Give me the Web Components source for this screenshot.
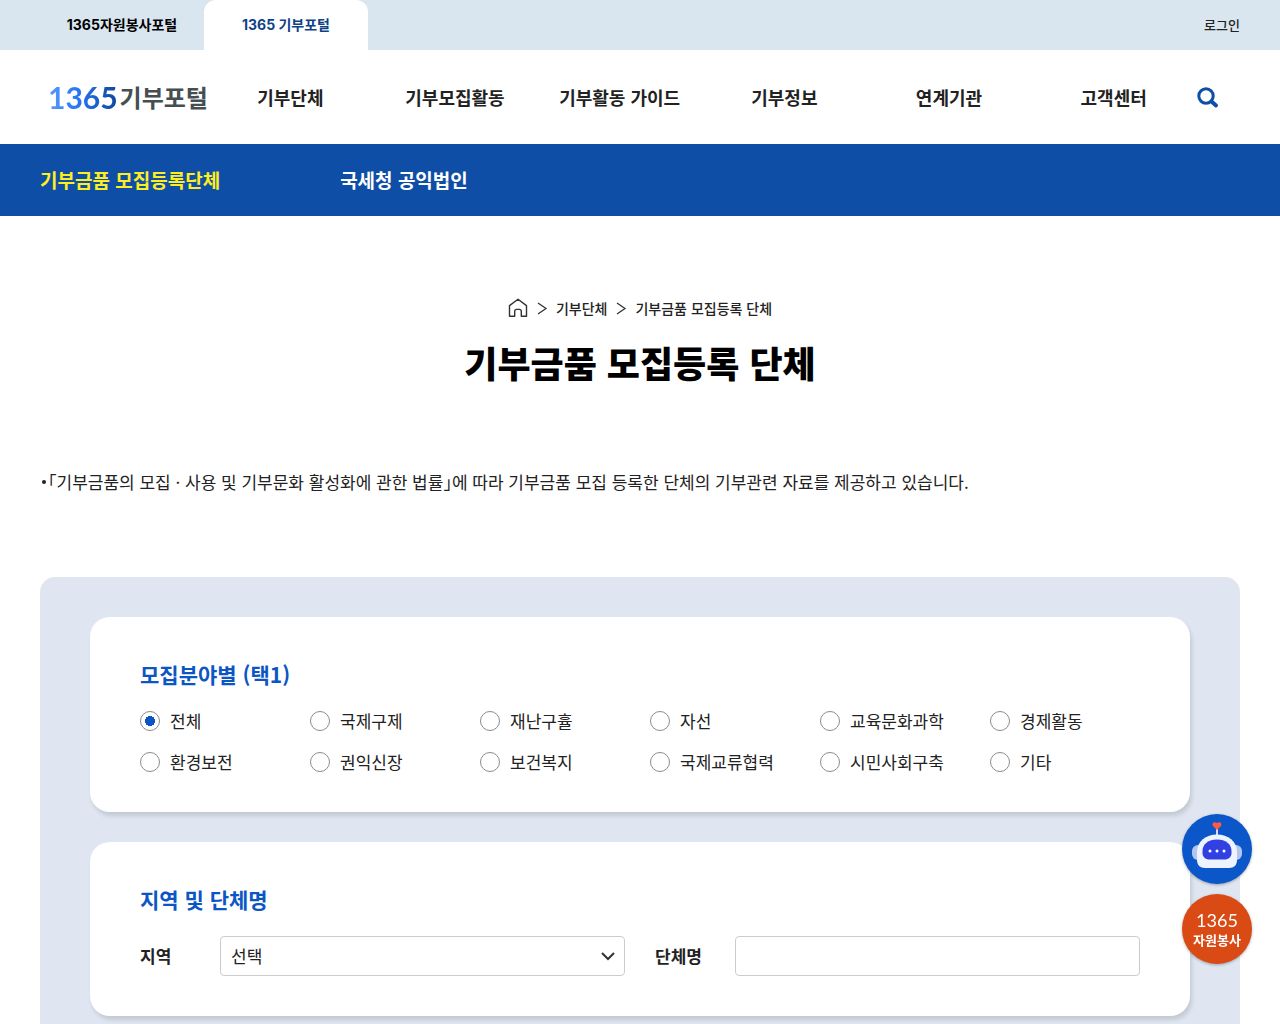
<!DOCTYPE html>
<html lang="ko">
<head>
<meta charset="UTF-8">
<meta name="viewport" content="width=device-width, initial-scale=1.0">
<title>기부금품 모집등록 단체</title>
<style>
    body {
        margin: 0;
        background: #fff;
        color: #222;
        font-family: "Noto Sans CJK KR", sans-serif;
        font-size: 17px;
        line-height: 24px;
    }

    main {
        max-width: 1200px;
        margin: 0 auto;
        padding: 80px 40px 0;
    }
</style>
</head>
<body>
<top-bar></top-bar>
<site-header></site-header>
<sub-nav></sub-nav>
<main>
    <page-title>기부금품 모집등록 단체</page-title>
    <page-note>「기부금품의 모집 · 사용 및 기부문화 활성화에 관한 법률」에 따라 기부금품 모집 등록한 단체의 기부관련 자료를 제공하고 있습니다.</page-note>
    <search-panel>
        <search-card heading="모집분야별 (택1)">
            <category-radios></category-radios>
        </search-card>
        <search-card heading="지역 및 단체명">
            <region-fields></region-fields>
        </search-card>
    </search-panel>
</main>
<quick-links></quick-links>

<script>
class TopBar extends HTMLElement {
    connectedCallback() {
        this.attachShadow({ mode: 'open' });
        this.shadowRoot.innerHTML = `
            <style>
                :host {
                    display: block;
                    background: #d9e6f0;
                    font-size: 14px;
                }

                .bar {
                    display: flex;
                    align-items: stretch;
                    max-width: 1200px;
                    height: 50px;
                    margin: 0 auto;
                    padding: 0 40px;
                }

                a {
                    display: flex;
                    align-items: center;
                    color: #000;
                    text-decoration: none;
                }

                .tab {
                    justify-content: center;
                    width: 164px;
                    border-radius: 12px 12px 0 0;
                    font-family: Inter, "Noto Sans CJK KR", sans-serif;
                    font-weight: 700;
                }

                .tab.on {
                    background: #fff;
                    color: #0f4287;
                }

                .login {
                    margin-left: auto;
                    color: #222;
                    font-size: 13px;
                    font-weight: 500;
                }
            </style>
            <div class="bar">
                <a class="tab" href="#">1365자원봉사포털</a>
                <a class="tab on" href="#">1365 기부포털</a>
                <a class="login" href="#">로그인</a>
            </div>
        `;
    }
}

class SiteHeader extends HTMLElement {
    connectedCallback() {
        this.attachShadow({ mode: 'open' });
        this.shadowRoot.innerHTML = `
            <style>
                :host {
                    display: block;
                    background: #fff;
                }

                .header {
                    display: flex;
                    align-items: center;
                    max-width: 1200px;
                    height: 94px;
                    margin: 0 auto;
                    padding: 0 40px;
                }

                a {
                    color: #222;
                    text-decoration: none;
                }

                .logo {
                    display: flex;
                    align-items: center;
                    gap: 2px;
                    width: 160px;
                    padding-left: 8px;
                    white-space: nowrap;
                }

                .num {
                    background: linear-gradient(90deg, #5b9bff, #2779f5 40%, #0e479c);
                    -webkit-background-clip: text;
                    background-clip: text;
                    color: transparent;
                    font-family: Lato, sans-serif;
                    font-size: 30px;
                    font-weight: 700;
                    line-height: 40px;
                }

                .name {
                    color: #454f52;
                    font-size: 24px;
                    font-weight: 700;
                    line-height: 40px;
                }

                nav {
                    display: grid;
                    grid-template-columns: repeat(6, 1fr);
                    flex: 1;
                    text-align: center;
                    font-size: 18px;
                    font-weight: 700;
                }

                button {
                    display: flex;
                    margin: 0 20px 0 0;
                    padding: 0;
                    border: 0;
                    background: none;
                }
            </style>
            <div class="header">
                <a class="logo" href="#"><span class="num">1365</span><span class="name">기부포털</span></a>
                <nav>
                    <a href="#">기부단체</a>
                    <a href="#">기부모집활동</a>
                    <a href="#">기부활동 가이드</a>
                    <a href="#">기부정보</a>
                    <a href="#">연계기관</a>
                    <a href="#">고객센터</a>
                </nav>
                <button type="button" aria-label="검색">
                    <svg width="24" height="24" viewBox="0 0 24 24" fill="none" stroke="#0f4ea6" stroke-linecap="round">
                        <circle cx="10" cy="11" r="7.2" stroke-width="3"/>
                        <path d="M15.5 16.5l4.5 4" stroke-width="4"/>
                    </svg>
                </button>
            </div>
        `;
    }
}

class SubNav extends HTMLElement {
    connectedCallback() {
        this.attachShadow({ mode: 'open' });
        this.shadowRoot.innerHTML = `
            <style>
                :host {
                    display: block;
                    background: #0f4ea6;
                    font-size: 19px;
                    font-weight: 700;
                }

                nav {
                    display: flex;
                    align-items: center;
                    gap: 120px;
                    max-width: 1200px;
                    height: 72px;
                    margin: 0 auto;
                    padding: 0 40px;
                }

                a {
                    color: #fff;
                    text-decoration: none;
                }

                .on {
                    color: #ffee1f;
                }
            </style>
            <nav>
                <a class="on" href="#">기부금품 모집등록단체</a>
                <a href="#">국세청 공익법인</a>
            </nav>
        `;
    }
}

class PageTitle extends HTMLElement {
    connectedCallback() {
        this.attachShadow({ mode: 'open' });
        this.shadowRoot.innerHTML = `
            <style>
                :host {
                    display: block;
                    text-align: center;
                }

                .crumbs {
                    display: flex;
                    align-items: center;
                    justify-content: center;
                    gap: 8px;
                    font-size: 14px;
                    font-weight: 500;
                }

                a {
                    display: flex;
                    color: #222;
                    text-decoration: none;
                }

                h1 {
                    margin: 16px 0 0;
                    color: #000;
                    font-size: 36px;
                    font-weight: 900;
                    line-height: 52px;
                }
            </style>
            <div class="crumbs">
                <a href="#" aria-label="홈">
                    <svg width="20" height="20" viewBox="0 0 20 20" fill="none" stroke="#333" stroke-width="1.4" stroke-linejoin="round">
                        <path d="M1.5 7.6L10 1.2l8.5 6.4v10.6h-5.2v-4.8a2 2 0 0 0-2-2H8.7a2 2 0 0 0-2 2v4.8H1.5z"/>
                    </svg>
                </a>
                <svg width="12" height="14" viewBox="0 0 12 14" fill="none" stroke="#333" stroke-width="1.3"><path d="M2 2l8 5.500-8 5.500"/></svg>
                <a href="#">기부단체</a>
                <svg width="12" height="14" viewBox="0 0 12 14" fill="none" stroke="#333" stroke-width="1.3"><path d="M2 2l8 5.500-8 5.500"/></svg>
                <a href="#">기부금품 모집등록 단체</a>
            </div>
            <h1><slot></slot></h1>
        `;
    }
}

class PageNote extends HTMLElement {
    connectedCallback() {
        this.attachShadow({ mode: 'open' });
        this.shadowRoot.innerHTML = `
            <style>
                :host {
                    display: block;
                    margin: 82px 0 83px;
                }

                /* half-width corner brackets */
                p {
                    display: flex;
                    align-items: center;
                    gap: 2px;
                    margin: 0;
                    padding-left: 2px;
                    font-feature-settings: "halt";
                }

                p::before {
                    content: "";
                    flex: none;
                    width: 4px;
                    height: 4px;
                    border-radius: 50%;
                    background: #222;
                }
            </style>
            <p><span><slot></slot></span></p>
        `;
    }
}

class SearchPanel extends HTMLElement {
    connectedCallback() {
        this.attachShadow({ mode: 'open' });
        this.shadowRoot.innerHTML = `
            <style>
                :host {
                    display: flex;
                    flex-direction: column;
                    gap: 30px;
                    padding: 40px 50px;
                    border-radius: 15px;
                    background: #dfe6f1;
                }
            </style>
            <slot></slot>
        `;
    }
}

class SearchCard extends HTMLElement {
    connectedCallback() {
        this.attachShadow({ mode: 'open' });
        this.shadowRoot.innerHTML = `
            <style>
                :host {
                    display: block;
                    padding: 40px 50px;
                    border-radius: 20px;
                    background: #fff;
                    box-shadow: 2px 4px 4px rgba(0, 0, 0, 0.12);
                }

                h2 {
                    margin: 0 0 20px;
                    color: #0b56c4;
                    font-size: 21px;
                    font-weight: 700;
                    line-height: 34px;
                }
            </style>
            <h2>${this.getAttribute('heading')}</h2>
            <slot></slot>
        `;
    }
}

class CategoryRadios extends HTMLElement {
    connectedCallback() {
        const items = ['전체', '국제구제', '재난구휼', '자선', '교육문화과학', '경제활동',
            '환경보전', '권익신장', '보건복지', '국제교류협력', '시민사회구축', '기타'];
        this.attachShadow({ mode: 'open' });
        this.shadowRoot.innerHTML = `
            <style>
                :host {
                    display: grid;
                    grid-template-columns: repeat(5, 17%) 1fr;
                    row-gap: 21px;
                    line-height: 20px;
                }

                label {
                    display: flex;
                    align-items: center;
                    gap: 10px;
                }

                input {
                    appearance: none;
                    flex: none;
                    box-sizing: border-box;
                    width: 20px;
                    height: 20px;
                    margin: 0;
                    border: 1px solid #8c8c8c;
                    border-radius: 50%;
                    background: #fff;
                }

                input:checked {
                    background: radial-gradient(circle, #0b56c4 5px, #fff 5px);
                }
            </style>
            ${items.map((name, i) => `
                <label><input type="radio" name="field" value="${i}"${i === 0 ? ' checked' : ''}>${name}</label>
            `).join('')}
        `;
    }
}

class RegionFields extends HTMLElement {
    connectedCallback() {
        this.attachShadow({ mode: 'open' });
        this.shadowRoot.innerHTML = `
            <style>
                :host {
                    display: grid;
                    grid-template-columns: 1fr 1fr;
                    gap: 30px;
                }

                .field {
                    display: flex;
                    align-items: center;
                }

                label {
                    width: 80px;
                    font-weight: 700;
                }

                .box {
                    display: flex;
                    flex: 1;
                    position: relative;
                }

                select, input {
                    appearance: none;
                    box-sizing: border-box;
                    width: 100%;
                    height: 40px;
                    margin: 0;
                    padding: 0 10px;
                    border: 1px solid #ccc;
                    border-radius: 4px;
                    background: #fff;
                    color: #222;
                    font: inherit;
                }

                /* arrow over the select */
                .box svg {
                    position: absolute;
                    top: 14px;
                    right: 10px;
                    pointer-events: none;
                }
            </style>
            <div class="field">
                <label for="region">지역</label>
                <div class="box">
                    <select id="region"><option>선택</option></select>
                    <svg width="14" height="12" viewBox="0 0 14 12" fill="none" stroke="#333" stroke-width="2"><path d="M1 3l6 6 6-6"/></svg>
                </div>
            </div>
            <div class="field">
                <label for="group">단체명</label>
                <div class="box"><input id="group" type="text"></div>
            </div>
        `;
    }
}

class QuickLinks extends HTMLElement {
    connectedCallback() {
        this.attachShadow({ mode: 'open' });
        this.shadowRoot.innerHTML = `
            <style>
                :host {
                    display: flex;
                    flex-direction: column;
                    gap: 10px;
                    position: fixed;
                    right: 28px;
                    bottom: 60px;
                }

                button, a {
                    display: flex;
                    flex-direction: column;
                    align-items: center;
                    justify-content: center;
                    width: 70px;
                    height: 70px;
                    padding: 0;
                    border: 0;
                    border-radius: 50%;
                    background: #0b56c9;
                    box-shadow: 0 1px 3px rgba(0, 0, 0, 0.3);
                }

                a {
                    background: #d94a14;
                    color: #fff;
                    text-decoration: none;
                }

                .num {
                    font-family: Lato, sans-serif;
                    font-size: 18px;
                    line-height: 22px;
                }

                .name {
                    font-size: 13px;
                    font-weight: 700;
                    line-height: 18px;
                }
            </style>
            <button type="button" aria-label="챗봇">
                <svg width="70" height="70" viewBox="0 0 70 70">
                    <rect x="10" y="31" width="14" height="15" rx="6" fill="#b3c6ee"/>
                    <rect x="46" y="31" width="14" height="15" rx="6" fill="#b3c6ee"/>
                    <path d="M35 14v9" stroke="#fff" stroke-width="1.6"/>
                    <path d="M35 16l-4-4c-1.600-3 1.500-5 4-3 2.500-2 5.600 0 4 3z" fill="#fa5a46"/>
                    <path d="M15 38c0-11 9-17.500 20-17.500S55 27 55 38v8c0 5-3 8-8 8H23c-5 0-8-3-8-8z" fill="#eef4ff"/>
                    <path d="M20.500 37c0-7 6-11.500 14.500-11.500S49.500 30 49.500 37v2c0 4-3 6.500-7 6.500h-15c-4 0-7-2.500-7-6.500z" fill="#3140e0"/>
                    <g fill="#fff"><circle cx="28" cy="37" r="1.500"/><circle cx="35" cy="37" r="1.500"/><circle cx="42" cy="37" r="1.500"/></g>
                </svg>
            </button>
            <a href="#"><span class="num">1365</span><span class="name">자원봉사</span></a>
        `;
    }
}

customElements.define('top-bar', TopBar);
customElements.define('site-header', SiteHeader);
customElements.define('sub-nav', SubNav);
customElements.define('page-title', PageTitle);
customElements.define('page-note', PageNote);
customElements.define('search-panel', SearchPanel);
customElements.define('search-card', SearchCard);
customElements.define('category-radios', CategoryRadios);
customElements.define('region-fields', RegionFields);
customElements.define('quick-links', QuickLinks);
</script>
</body>
</html>
